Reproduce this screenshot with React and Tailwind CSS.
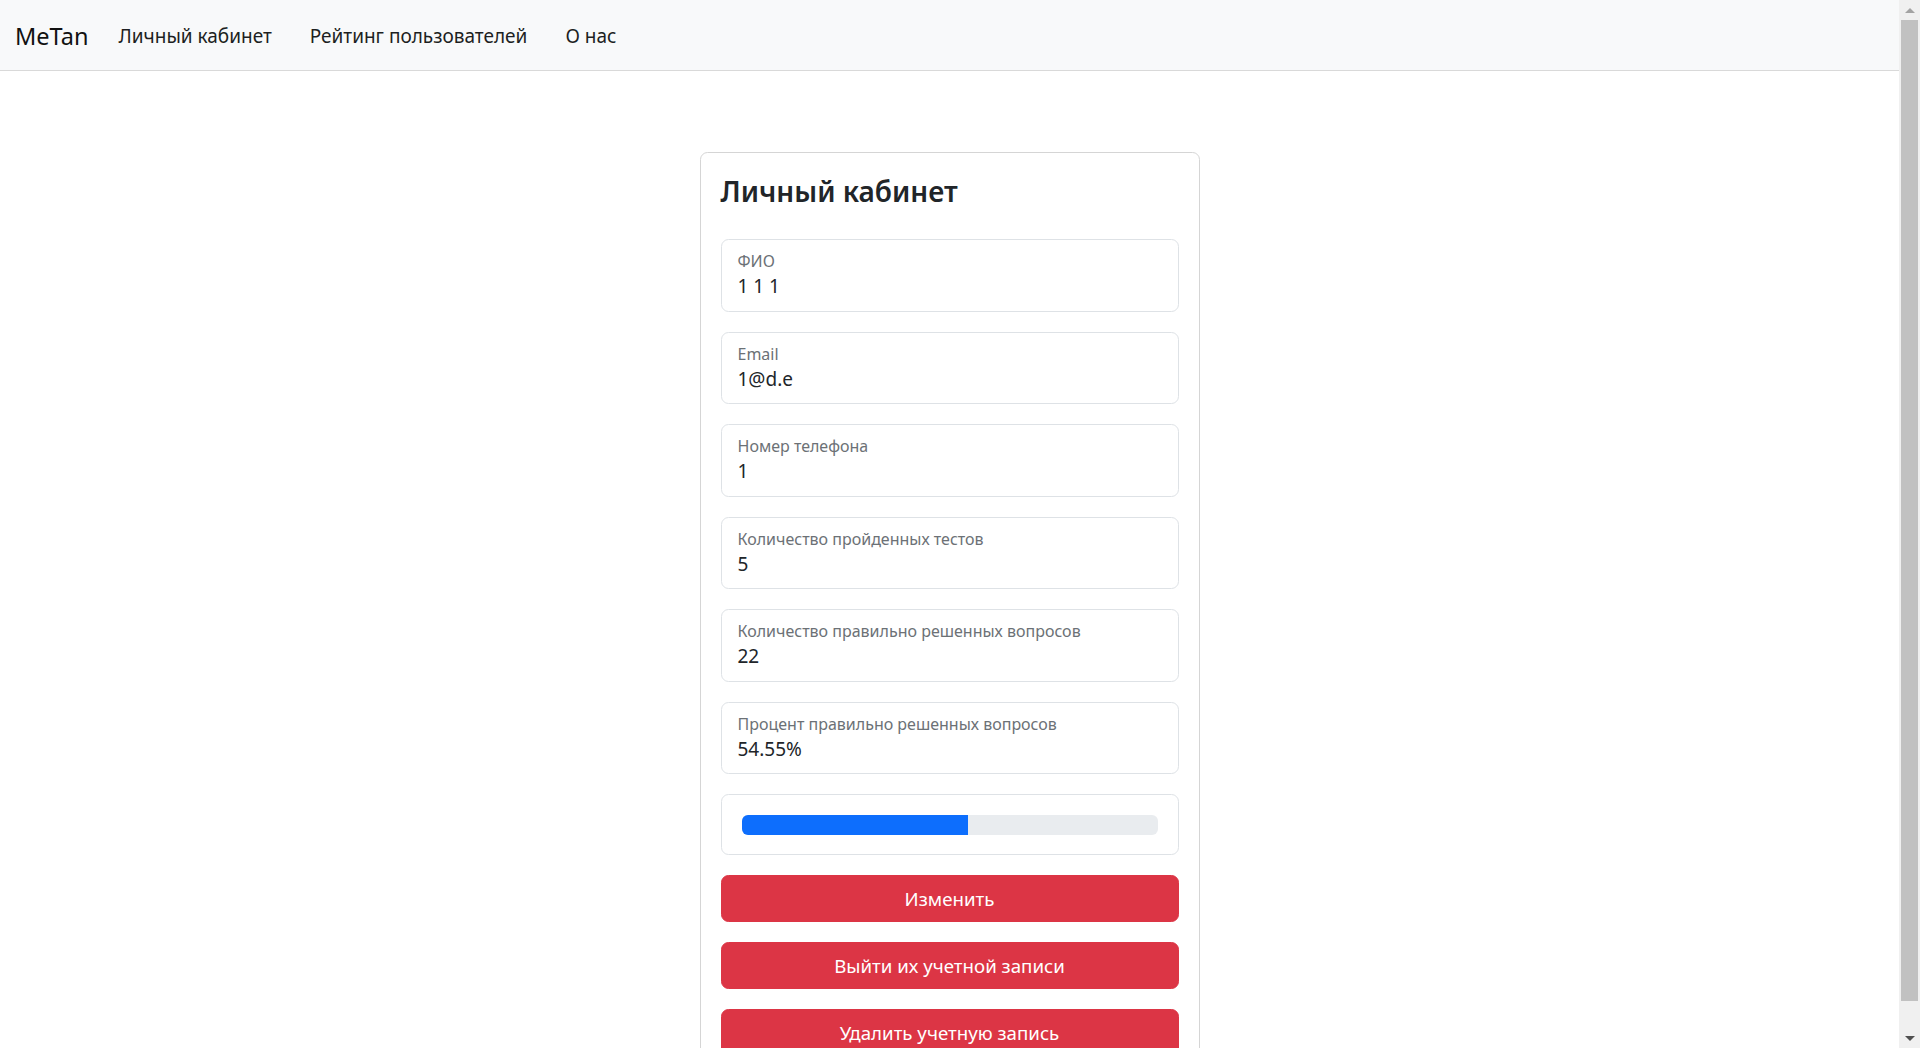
import React from "react";

const fields = [
  { label: "ФИО", value: "1 1 1" },
  { label: "Email", value: "1@d.e" },
  { label: "Номер телефона", value: "1" },
  { label: "Количество пройденных тестов", value: "5" },
  { label: "Количество правильно решенных вопросов", value: "22" },
  { label: "Процент правильно решенных вопросов", value: "54.55%" },
];

function Field({ label, value }) {
  return (
    <div className="mb-5 h-[72.5px] rounded-[7.5px] border border-[#dee2e6] bg-white px-[16px] pt-[11px]">
      <div className="text-[16px] leading-[20px] text-[#6c7176]">{label}</div>
      <div className="mt-[3px] text-[19px] leading-[24px] text-[#212529]">{value}</div>
    </div>
  );
}

function Btn({ children, last }) {
  return (
    <button
      className={
        "block h-[47px] w-full rounded-[7.5px] border border-[#dc3545] bg-[#dc3545] text-[18.7px] leading-[30px] text-white " +
        (last ? "" : "mb-5")
      }
    >
      {children}
    </button>
  );
}

function Scrollbar() {
  return (
    <div className="flex w-[21px] shrink-0 flex-col bg-[#f0f0f0]">
      <div className="flex h-[20px] items-center justify-center">
        <svg width="10" height="5" viewBox="0 0 10 5">
          <polygon points="0,5 5,0 10,5" fill="#a3a3a3" />
        </svg>
      </div>
      <div className="mx-[2px] h-[981px] bg-[#c1c1c1]" />
      <div className="flex flex-1 items-end justify-center pb-[7px]">
        <svg width="10" height="5" viewBox="0 0 10 5">
          <polygon points="0,0 10,0 5,5" fill="#505050" />
        </svg>
      </div>
    </div>
  );
}

export default function App() {
  const pct = 54.55;
  return (
    <div className="flex h-screen overflow-hidden bg-white font-['Noto_Sans',sans-serif] text-[#212529]">
      <div className="min-w-0 flex-1 overflow-hidden">
        <nav className="flex h-[71px] items-center border-b border-[#d9d9d9] bg-[#f8f9fa] px-[15px] pt-[2px]">
          <span className="mr-[30px] text-[23.5px] leading-[30px] text-[#111]">MeTan</span>
          <ul className="flex gap-[38px] text-[19px] leading-[30px] text-[#1d1f22]">
            <li>Личный кабинет</li>
            <li>Рейтинг пользователей</li>
            <li>О нас</li>
          </ul>
        </nav>
        <main className="flex justify-center pb-[8px] pt-[81px]">
          <div className="w-[500px] rounded-[7.5px] border border-[#d5d5d5] bg-white p-5">
            <h4 className="mb-[30px] pt-[1px] text-[28px] font-semibold leading-[35px] text-[#212529]">
              Личный кабинет
            </h4>
            {fields.map((f) => (
              <Field key={f.label} label={f.label} value={f.value} />
            ))}
            <div className="mb-5 flex h-[61px] items-center rounded-[7.5px] border border-[#dee2e6] px-[20px]">
              <div className="h-[20px] w-full overflow-hidden rounded-[6px] bg-[#e9ecef]">
                <div className="h-full bg-[#0d6efd]" style={{ width: `${pct}%` }} />
              </div>
            </div>
            <Btn>Изменить</Btn>
            <Btn>Выйти их учетной записи</Btn>
            <Btn last>Удалить учетную запись</Btn>
          </div>
        </main>
      </div>
      <Scrollbar />
    </div>
  );
}
